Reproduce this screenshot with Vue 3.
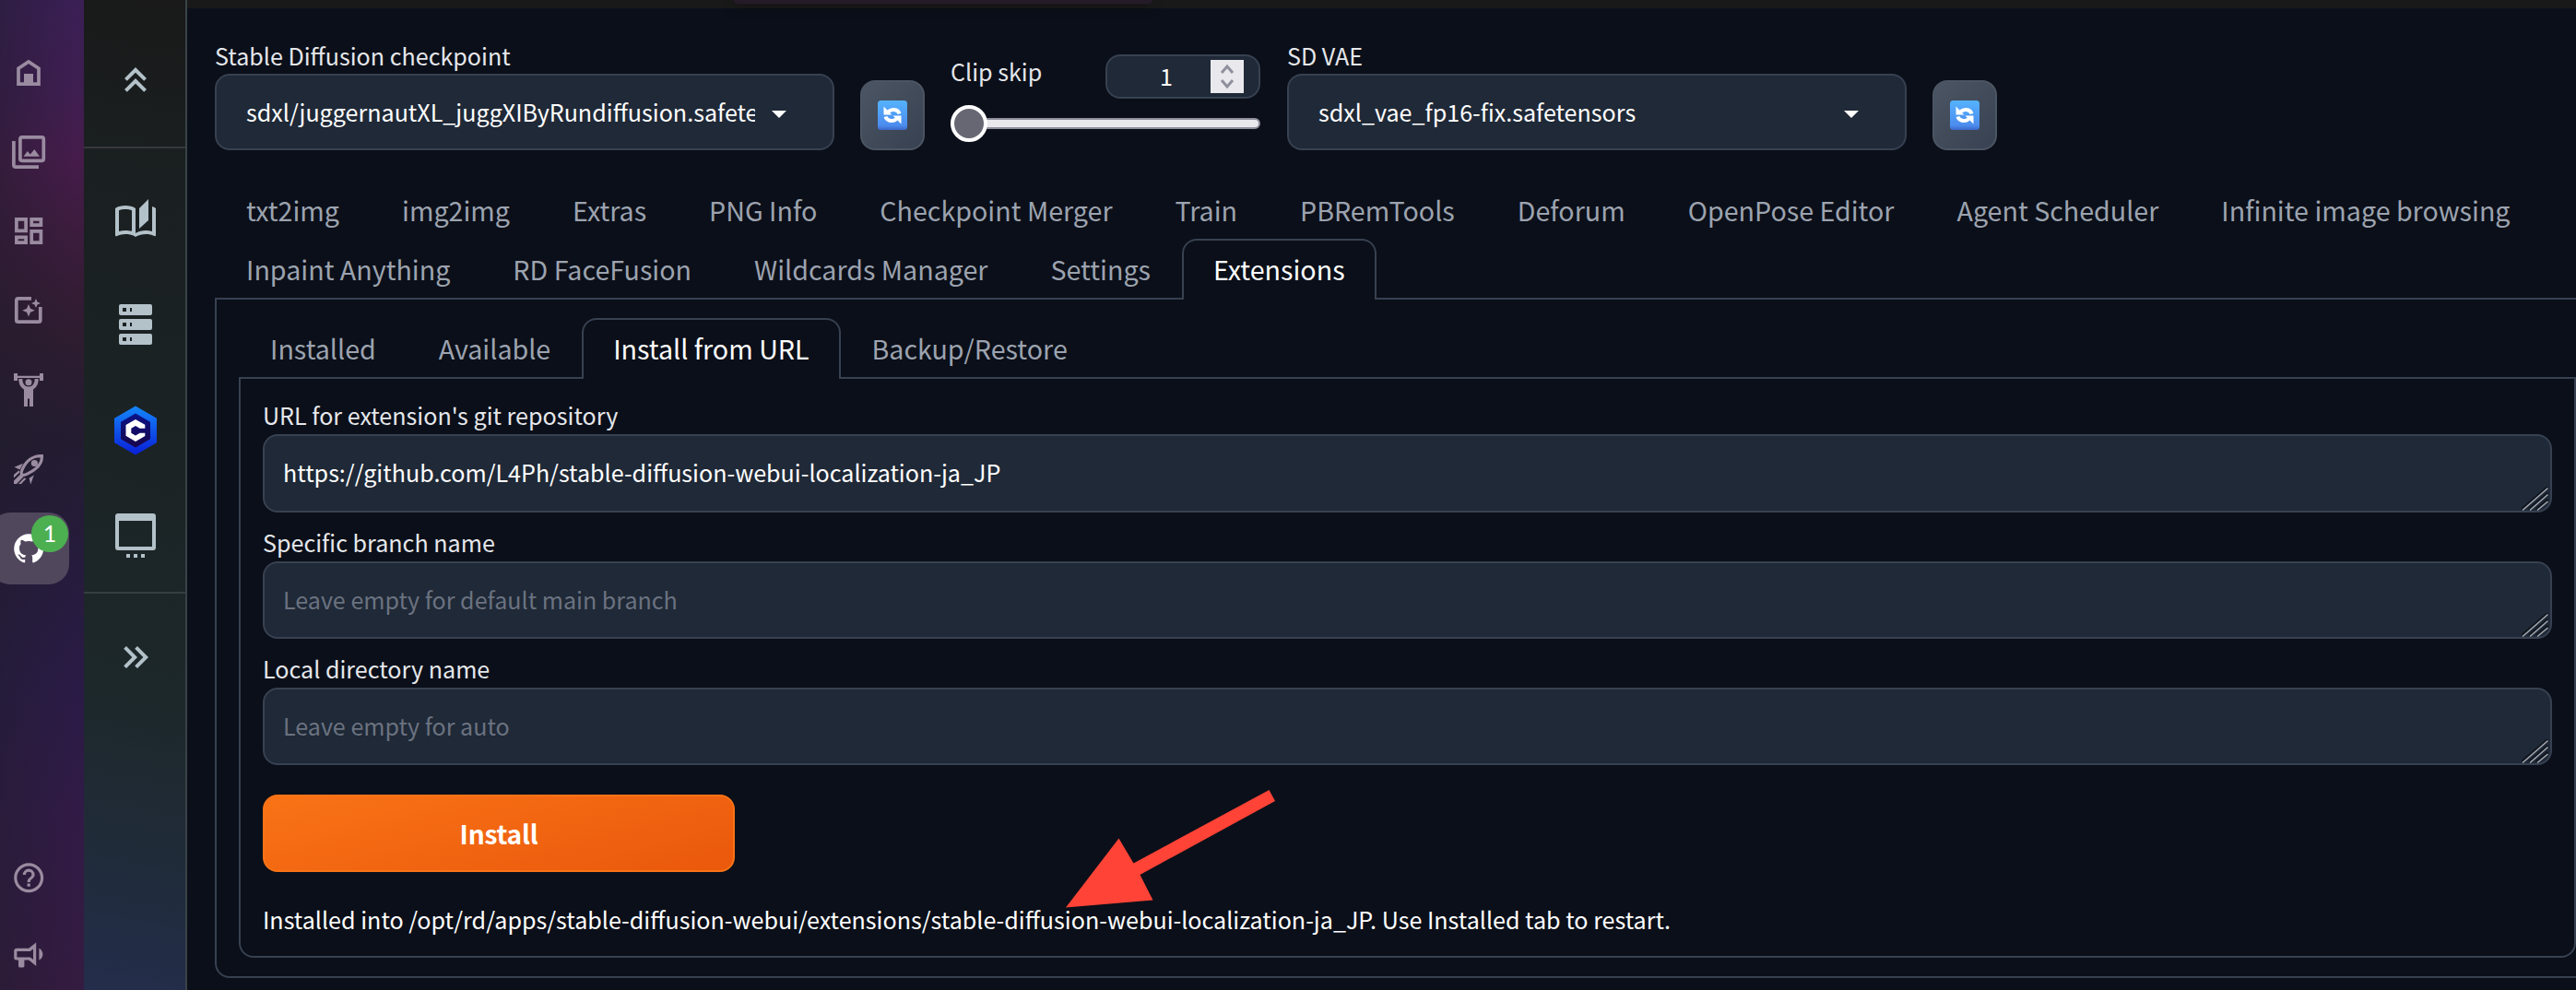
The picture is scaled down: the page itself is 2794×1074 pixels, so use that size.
<template>
  <div class="app">
    <nav class="rail">
      <div class="rail-item" v-for="icon in railIcons" :key="icon">
        <svg v-if="icon == 'home'" viewBox="0 0 40 40" class="line">
          <path d="M9 32.2V15.2L20 8l11 7.2v17z" />
          <path class="fill" d="M15 21h10v12H15z" />
        </svg>
        <svg v-else-if="icon == 'gallery'" viewBox="0 0 40 40" class="line">
          <path d="M3.9 8v26q0 2.2 2.2 2.2H31" />
          <rect x="10.9" y="3.9" width="25.4" height="25.4" rx="2" />
          <path class="fill" d="M14.5 24.7l4.3-5.7 3 3.4 4.5-5.4 5.7 7.7z" />
        </svg>
        <svg v-else-if="icon == 'dashboard'" viewBox="0 0 40 40" class="line">
          <path d="M6.9 6.9h10.2v12.4H6.9zM23.2 6.9h10.2v6.3H23.2zM6.9 26.4h10.2v5.8H6.9zM23.2 19.9h10.2v12.3H23.2z" />
        </svg>
        <svg v-else-if="icon == 'magic'" viewBox="0 0 40 40" class="line">
          <path d="M23 6.8H8.8q-2 0-2 2v21.4q0 2 2 2h22q2 0 2-2V16" />
          <path class="fill" d="M20 13l2 4.8 4.8 2-4.8 2-2 4.8-2-4.8-4.8-2 4.8-2zM28 7l1.5 3.6L33 12l-3.5 1.5L28 17l-1.5-3.5L23 12l3.5-1.4z" />
        </svg>
        <svg v-else-if="icon == 'train'" viewBox="0 0 40 40">
          <path d="M4 2h4v2.700h24V2h4v8h-4V7H8v3H4z" />
          <circle cx="20" cy="11.7" r="3.5" />
          <path d="M9.3 8h4c0 5 2.7 8.5 6.7 8.5s6.7-3.5 6.7-8.5h4c0 5.5-2 9.3-5.7 11.5V38h-4v-8.5h-2V38h-4V19.5C11.3 17.3 9.3 13.5 9.3 8z" />
        </svg>
        <svg v-else viewBox="0 0 40 40">
          <path class="stroke" d="M34.4 5.6C25 5 17.5 11 13.5 19.5c-1.5 3.4-1.8 5.2-.8 6.2s3 .9 6.3-.8C28 20.5 35 14 34.4 5.6z" />
          <circle cx="26.4" cy="13.5" r="3.6" />
          <path d="M14 13.7L4.5 17.8l6 2.7zM25.8 26.5l-5.2 3.3 1.6 6.8zM4 26l5.5-4.8 1 2L4 29.5zM4 32.5l7.5-7.3 3 3L7 36H4zM9 36l6.3-6.5 2.2.8L12 36z" />
        </svg>
      </div>
      <div class="rail-item">
        <div class="current">
          <svg class="github" viewBox="0 0 24 24">
            <path d="M12,2A10,10 0 0,0 2,12C2,16.42 4.87,20.17 8.84,21.5C9.34,21.58 9.5,21.27 9.5,21C9.5,20.77 9.5,20.14 9.5,19.31C6.73,19.91 6.14,17.97 6.14,17.97C5.68,16.81 5.03,16.5 5.03,16.5C4.12,15.88 5.1,15.9 5.1,15.9C6.1,15.97 6.63,16.93 6.63,16.93C7.5,18.45 8.97,18 9.54,17.76C9.63,17.11 9.89,16.67 10.17,16.42C7.95,16.17 5.62,15.31 5.62,11.5C5.62,10.39 6,9.5 6.65,8.79C6.55,8.54 6.2,7.5 6.75,6.15C6.75,6.15 7.59,5.88 9.5,7.17C10.29,6.95 11.15,6.84 12,6.84C12.85,6.84 13.71,6.95 14.5,7.17C16.41,5.88 17.25,6.15 17.25,6.15C17.8,7.5 17.45,8.54 17.35,8.79C18,9.5 18.38,10.39 18.38,11.5C18.38,15.32 16.04,16.16 13.81,16.41C14.17,16.72 14.5,17.33 14.5,18.26C14.5,19.6 14.5,20.68 14.5,21C14.5,21.27 14.66,21.59 15.17,21.5C19.14,20.16 22,16.42 22,12A10,10 0 0,0 12,2Z" />
          </svg>
          <span class="badge">1</span>
        </div>
      </div>
      <div class="rail-bottom">
        <svg viewBox="0 0 24 24">
          <path d="M11,18H13V16H11V18M12,2A10,10 0 0,0 2,12A10,10 0 0,0 12,22A10,10 0 0,0 22,12A10,10 0 0,0 12,2M12,20C7.59,20 4,16.41 4,12C4,7.59 7.59,4 12,4C16.41,4 20,7.59 20,12C20,16.41 16.41,20 12,20M12,6A4,4 0 0,0 8,10H10A2,2 0 0,1 12,8A2,2 0 0,1 14,10C14,12 11,11.75 11,15H13C13,12.75 16,12.5 16,10A4,4 0 0,0 12,6Z" />
        </svg>
        <svg viewBox="0 0 24 24">
          <path d="M12,8H4A2,2 0 0,0 2,10V14A2,2 0 0,0 4,16H5V20A1,1 0 0,0 6,21H8A1,1 0 0,0 9,20V16H12L17,20V4L12,8M15,15.6L13,14H4V10H13L15,8.4V15.6M21.5,12C21.5,13.71 20.54,15.26 19,16V8C20.53,8.75 21.5,10.3 21.5,12Z" />
        </svg>
      </div>
    </nav>

    <aside class="side">
      <div class="side-top">
        <svg viewBox="0 0 24 24">
          <path d="M7.41,18.41L6,17L12,11L18,17L16.59,18.41L12,13.83L7.41,18.41M7.41,12.41L6,11L12,5L18,11L16.59,12.41L12,7.83L7.41,12.41Z" />
        </svg>
      </div>
      <div class="side-apps">
        <div class="side-item">
          <svg viewBox="0 0 24 24">
            <path d="M19 1L14 6V17L19 12.5V1M21 5V18.5C19.9 18.15 18.7 18 17.5 18C15.8 18 13.35 18.65 12 19.5V6C10.55 4.9 8.45 4.5 6.5 4.5C4.55 4.5 2.45 4.9 1 6V20.65C1 20.9 1.25 21.15 1.5 21.15C1.6 21.15 1.65 21.1 1.75 21.1C3.1 20.45 5.05 20 6.5 20C8.45 20 10.55 20.4 12 21.5C13.35 20.65 15.8 20 17.5 20C19.15 20 20.85 20.3 22.25 21.05C22.35 21.1 22.4 21.1 22.5 21.1C22.75 21.1 23 20.85 23 20.6V6C22.4 5.55 21.75 5.25 21 5M10 18.41C8.75 18.09 7.5 18 6.5 18C5.44 18 4.18 18.19 3 18.5V7.13C3.91 6.73 5.14 6.5 6.5 6.5C7.86 6.5 9.09 6.73 10 7.13V18.41Z" />
          </svg>
        </div>
        <div class="side-item">
          <svg viewBox="0 0 24 24">
            <path fill-rule="evenodd" d="M4,1H20A1,1 0 0,1 21,2V6A1,1 0 0,1 20,7H4A1,1 0 0,1 3,6V2A1,1 0 0,1 4,1M4,9H20A1,1 0 0,1 21,10V14A1,1 0 0,1 20,15H4A1,1 0 0,1 3,14V10A1,1 0 0,1 4,9M4,17H20A1,1 0 0,1 21,18V22A1,1 0 0,1 20,23H4A1,1 0 0,1 3,22V18A1,1 0 0,1 4,17M9,5H10V3H9V5M9,13H10V11H9V13M9,21H10V19H9V21M5,3V5H7V3H5M5,11V13H7V11H5M5,19V21H7V19H5Z" />
          </svg>
        </div>
        <div class="side-item">
          <svg class="hex" viewBox="0 0 46 54">
            <defs>
              <linearGradient id="hexOuter" x1="0" y1="0" x2="0" y2="1">
                <stop offset="0" stop-color="#1487fb" />
                <stop offset="1" stop-color="#0a1fd6" />
              </linearGradient>
              <linearGradient id="hexInner" x1="0" y1="0" x2="0" y2="1">
                <stop offset="0" stop-color="#0a1388" />
                <stop offset="1" stop-color="#1a0449" />
              </linearGradient>
            </defs>
            <path fill="url(#hexOuter)" d="M23 0.5l23 13.3v26.4L23 53.5 0 40.2V13.8z" />
            <path fill="url(#hexInner)" d="M23 8.5l16 9.2v18.6l-16 9.2-16-9.2V17.7z" />
            <path fill="#fff" d="M23 15l10.3 5.8v4h-5.6L23 22l-4.7 2.7v5L23 32.500l4.700-2.800h5.600v3.200L23 39l-10.500-6.200V21z" />
          </svg>
        </div>
        <div class="side-item">
          <svg viewBox="0 0 24 24">
            <path fill-rule="evenodd" d="M2.5 0H21.5A1.5 1.5 0 0 1 23 1.5V18.5A1.5 1.5 0 0 1 21.5 20H2.5A1.5 1.5 0 0 1 1 18.5V1.5A1.5 1.5 0 0 1 2.5 0M3 4V18H21V4ZM7 22H9V24H7ZM11 22H13V24H11ZM15 22H17V24H15Z" />
          </svg>
        </div>
      </div>
      <div class="side-more">
        <svg viewBox="0 0 24 24">
          <path d="M5.59,7.41L7,6L13,12L7,18L5.59,16.59L10.17,12L5.59,7.41M11.59,7.41L13,6L19,12L13,18L11.59,16.59L16.17,12L11.59,7.41Z" />
        </svg>
      </div>
    </aside>

    <main class="main">
      <div class="strip"><div class="notch"></div></div>

      <section class="settings">
        <template v-for="item in selects" :key="item.label">
          <div class="clip" v-if="item.label == 'SD VAE'">
            <div class="clip-head">
              <span class="clip-label">Clip skip</span>
              <div class="number">
                <span>{{ clipSkip }}</span>
                <div class="spin">
                  <svg viewBox="0 0 36 36">
                    <path d="M12 14l6-7 6 7M12 22l6 7 6-7" />
                  </svg>
                </div>
              </div>
            </div>
            <div class="slider"><div class="thumb"></div></div>
          </div>
          <div class="select-group">
            <label class="label">{{ item.label }}</label>
            <div class="select">
              <span class="value">{{ item.value }}</span>
              <svg viewBox="0 0 16 8"><path d="M0 0h16L8 8z" /></svg>
            </div>
          </div>
          <button class="refresh">
            <svg viewBox="0 0 32 32">
              <defs>
                <linearGradient id="sync" x1="0" y1="0" x2="0" y2="1">
                  <stop offset="0" stop-color="#55b2ff" />
                  <stop offset=".85" stop-color="#4c8cee" />
                  <stop offset="1" stop-color="#3b68c8" />
                </linearGradient>
              </defs>
              <rect width="32" height="32" rx="3.5" fill="url(#sync)" />
              <path class="arc" d="M23.5 14.5c-1-4-7-6.5-12-2.5M8.5 17.5c1 4 7 6.5 12 2.5" />
              <path fill="#fff" d="M6.5 6.5v9h9zM25.5 25.5v-9h-9z" />
            </svg>
          </button>
        </template>
      </section>

      <div class="tabs">
        <button
          v-for="tab in tabs"
          :key="tab"
          :class="['tab', { active: tab == currentTab }]"
          @click="currentTab = tab"
        >{{ tab }}</button>
      </div>

      <section class="panel">
        <div class="tabs">
          <button
            v-for="tab in subTabs"
            :key="tab"
            :class="['tab', { active: tab == currentSub }]"
            @click="currentSub = tab"
          >{{ tab }}</button>
        </div>
        <div class="inner">
          <div class="field" v-for="field in fields" :key="field.label">
            <label class="label">{{ field.label }}</label>
            <div class="box">
              <input type="text" v-model="field.value" :placeholder="field.placeholder" />
              <svg class="grip" viewBox="0 0 30 26">
                <path class="dark" d="M0 24.5L28.5 0M8 24.5L28.5 7M16 24.5L28.5 14" />
                <path class="light" d="M1 25.5L28.5 1.5M9 25.5L28.5 8.5M17 25.5L28.5 16M25 25.5L28.5 22.5" />
              </svg>
            </div>
          </div>
          <button class="install">Install</button>
          <p class="result">Installed into /opt/rd/apps/stable-diffusion-webui/extensions/stable-diffusion-webui-localization-ja_JP. Use Installed tab to restart.</p>
        </div>
      </section>
    </main>

    <!-- red pointer over the result message -->
    <svg class="pointer" viewBox="0 0 228 128">
      <path d="M0 127.500L57.500 52.500 73.500 79.500 220.500 0 227 12 80.500 92 94.500 119.500z" />
    </svg>
  </div>
</template>

<script setup>
import { ref } from 'vue'

const railIcons = ['home', 'gallery', 'dashboard', 'magic', 'train', 'rocket']

const clipSkip = ref(1)
const selects = ref([
  { label: 'Stable Diffusion checkpoint', value: 'sdxl/juggernautXL_juggXIByRundiffusion.safetensors' },
  { label: 'SD VAE', value: 'sdxl_vae_fp16-fix.safetensors' }
])

const tabs = [
  'txt2img',
  'img2img',
  'Extras',
  'PNG Info',
  'Checkpoint Merger',
  'Train',
  'PBRemTools',
  'Deforum',
  'OpenPose Editor',
  'Agent Scheduler',
  'Infinite image browsing',
  'Inpaint Anything',
  'RD FaceFusion',
  'Wildcards Manager',
  'Settings',
  'Extensions'
]
const currentTab = ref('Extensions')

const subTabs = ['Installed', 'Available', 'Install from URL', 'Backup/Restore']
const currentSub = ref('Install from URL')

const fields = ref([
  {
    label: "URL for extension's git repository",
    value: 'https://github.com/L4Ph/stable-diffusion-webui-localization-ja_JP',
    placeholder: ''
  },
  { label: 'Specific branch name', value: '', placeholder: 'Leave empty for default main branch' },
  { label: 'Local directory name', value: '', placeholder: 'Leave empty for auto' }
])
</script>

<style>
body {
  margin: 0;
  background: #0b0f19;
}
</style>

<style scoped>
* {
  box-sizing: border-box;
}
.app {
  position: relative;
  display: flex;
  width: 2794px;
  height: 1074px;
  overflow: hidden;
  background: #0b0f19;
  color: #fff;
  font-family: "Noto Sans CJK JP", "Noto Sans", sans-serif;
  font-size: 25.1px;
}
button,
input {
  font-family: inherit;
  margin: 0;
}
svg {
  display: block;
  flex: none;
}

/* purple rail */
.rail {
  display: flex;
  flex-direction: column;
  flex: none;
  width: 91px;
  padding: 36px 0 20px;
  background:
    linear-gradient(90deg, rgba(32, 28, 44, .45), rgba(32, 28, 44, 0) 90%),
    linear-gradient(180deg, #3a1f55 0%, #3f1e50 10%, #451c4a 16%, #3a1c3b 25%, #2e1c30 34%, #231c31 45%, #261b3c 57%, #2a1b46 70%, #311b46 82%, #341b40 100%);
}
.rail svg {
  width: 40px;
  height: 40px;
  fill: #9a8ba0;
}
.rail .line {
  fill: none;
  stroke: #9a8ba0;
  stroke-width: 3.7;
}
.rail .line .fill {
  fill: #9a8ba0;
  stroke: none;
}
.rail .stroke {
  fill: none;
  stroke: #9a8ba0;
  stroke-width: 3.2;
}
.rail-item {
  display: flex;
  align-items: center;
  height: 86px;
  padding-left: 11px;
}
.current {
  position: relative;
  display: flex;
  align-items: center;
  width: 86px;
  height: 78px;
  margin-left: -22px;
  padding-left: 22.8px;
  border-radius: 22px;
  background: #51475d;
}
.rail .github {
  width: 38.4px;
  height: 38.4px;
  fill: #fff;
}
.badge {
  position: absolute;
  top: 3px;
  right: 1px;
  width: 40px;
  height: 40px;
  border-radius: 50%;
  background: #4caf50;
  font-family: Lato, sans-serif;
  font-size: 25px;
  line-height: 39px;
  text-align: center;
}
.rail-bottom {
  display: flex;
  flex-direction: column;
  gap: 44px;
  margin-top: auto;
  padding-left: 11.8px;
}
.rail .rail-bottom svg {
  width: 38.4px;
  height: 38.4px;
}

/* dark icon column */
.side {
  flex: none;
  width: 112px;
  border-right: 2px solid #394347;
  background: linear-gradient(192deg, #191919 0%, #1a1f20 16%, #1b2324 45%, #1d282b 70%, #202b39 85%, #242d4b 100%);
}
.side svg {
  width: 48px;
  height: 48px;
  fill: #b3c1c9;
}
.side-top {
  display: flex;
  justify-content: center;
  height: 161px;
  padding: 63px 0 0 2px;
  border-bottom: 2px solid #36393b;
}
.side-apps {
  height: 483px;
  padding: 19.5px 0 0 2px;
  border-bottom: 2px solid #363f42;
}
.side-item {
  display: flex;
  align-items: center;
  justify-content: center;
  height: 114.5px;
}
.side .hex {
  width: 46px;
  height: 54px;
}
.side-more {
  display: flex;
  justify-content: center;
  padding: 44.7px 0 0 2px;
}

/* web ui */
.main {
  flex: 1;
  min-width: 0;
}
.strip {
  position: relative;
  height: 9px;
  background: #191919;
}
.notch {
  position: absolute;
  top: 0;
  left: 593px;
  width: 454px;
  height: 4px;
  border-radius: 0 0 10px 10px;
  background: #251b28;
  box-shadow: 0 2px 14px rgba(0, 0, 0, .45);
}
.settings {
  display: flex;
  align-items: flex-end;
  height: 154px;
  padding-left: 30px;
}
.label {
  display: block;
  height: 40px;
  line-height: 40px;
  color: #e5e7eb;
}
.select-group {
  width: 672px;
}
.select {
  display: flex;
  align-items: center;
  height: 83px;
  padding: 0 50px 2px 32px;
  border: 2px solid #374151;
  border-radius: 16px;
  background: #1f2937;
}
.value {
  width: 552px;
  margin-right: 18px;
  line-height: 40px;
  white-space: nowrap;
  overflow: hidden;
}
.select svg {
  width: 16px;
  height: 8px;
  margin-top: 6px;
  fill: #fff;
}
.refresh {
  display: flex;
  align-items: center;
  justify-content: center;
  width: 70px;
  height: 76px;
  margin-left: 28px;
  padding: 0;
  border: 2px solid #4b5563;
  border-radius: 16px;
  background: linear-gradient(135deg, #4b5563, #374151);
}
.refresh svg {
  width: 32px;
  height: 32px;
}
.arc {
  fill: none;
  stroke: #fff;
  stroke-width: 4;
}
.clip {
  width: 336px;
  height: 104px;
  margin: 0 29px 0 28px;
}
.clip-head {
  display: flex;
  justify-content: space-between;
  height: 48px;
}
.clip-label {
  line-height: 37px;
  color: #e5e7eb;
}
.number {
  display: flex;
  align-items: center;
  justify-content: flex-end;
  width: 168px;
  height: 48px;
  padding-right: 16px;
  border: 2px solid #374151;
  border-radius: 16px;
  background: #1f2937;
  line-height: 44px;
}
.number span {
  margin: 0 41px 2px 0;
}
.spin {
  width: 36px;
  height: 36px;
  background: #e9e9ed;
}
.spin path {
  fill: none;
  stroke: #8f8f9d;
  stroke-width: 3;
}
.slider {
  display: flex;
  align-items: center;
  height: 12px;
  margin-top: 21px;
  border: 2px solid #8f8f9d;
  border-radius: 6px;
  background: #e9e9ed;
}
.thumb {
  flex: none;
  width: 40px;
  height: 40px;
  margin-left: -2px;
  border: 4px solid #fff;
  border-radius: 50%;
  background: #676774;
}
.tabs {
  display: flex;
  flex-wrap: wrap;
  padding: 32px 0 0 30px;
  margin-bottom: -2px;
}
.tab {
  position: relative;
  height: 64px;
  padding: 0 32px 1px;
  border: 2px solid transparent;
  border-bottom: none;
  border-radius: 16px 16px 0 0;
  background: none;
  color: #9ca3af;
  font-size: 28.65px;
  line-height: 60px;
  white-space: nowrap;
}
.tab.active {
  height: 66px;
  padding-bottom: 3px;
  border-color: #374151;
  background: #0b0f19;
  color: #fff;
}
.panel {
  width: 2588px;
  height: 738px;
  margin-left: 30px;
  padding: 20px 24px 0;
  border: 2px solid #374151;
  border-radius: 0 0 16px 16px;
}
.panel .tabs {
  padding: 0;
}
.inner {
  width: 2535px;
  height: 630px;
  padding: 18px 24px 0;
  border: 2px solid #374151;
  border-radius: 0 0 16px 16px;
}
.field {
  width: 2483px;
  margin-bottom: 11px;
}
.field .label {
  height: 42px;
  line-height: 42px;
}
.box {
  position: relative;
  display: flex;
  height: 84px;
  border: 2px solid #374151;
  border-radius: 16px;
  background: #1f2937;
  overflow: hidden;
}
.field:first-child .box {
  height: 85px;
}
.box input {
  width: 100%;
  padding: 0 20px 4px;
  border: none;
  outline: none;
  background: none;
  color: #fff;
  font-size: 25.08px;
}
.field + .field input {
  padding-bottom: 3px;
}
.box input::placeholder {
  color: #6b7280;
  opacity: 1;
}
.grip {
  position: absolute;
  right: 1px;
  bottom: 0;
  width: 30px;
  height: 26px;
  fill: none;
}
.grip .dark {
  stroke: #10161f;
  stroke-width: 2.5;
}
.grip .light {
  stroke: #a5a9b0;
  stroke-width: 1.5;
}
.install {
  display: block;
  width: 512px;
  height: 84px;
  margin-top: 32px;
  padding: 0 0 2px;
  border: 2px solid #f97316;
  border-radius: 16px;
  background: linear-gradient(165deg, #f97316, #ea580c);
  color: #fff;
  font-size: 28.2px;
  font-weight: 600;
  letter-spacing: -.2px;
}
.result {
  margin: 31px 0 0;
  line-height: 40px;
  white-space: nowrap;
}
.pointer {
  position: absolute;
  left: 1156px;
  top: 857px;
  width: 228px;
  height: 128px;
  fill: #ff4336;
}
</style>
